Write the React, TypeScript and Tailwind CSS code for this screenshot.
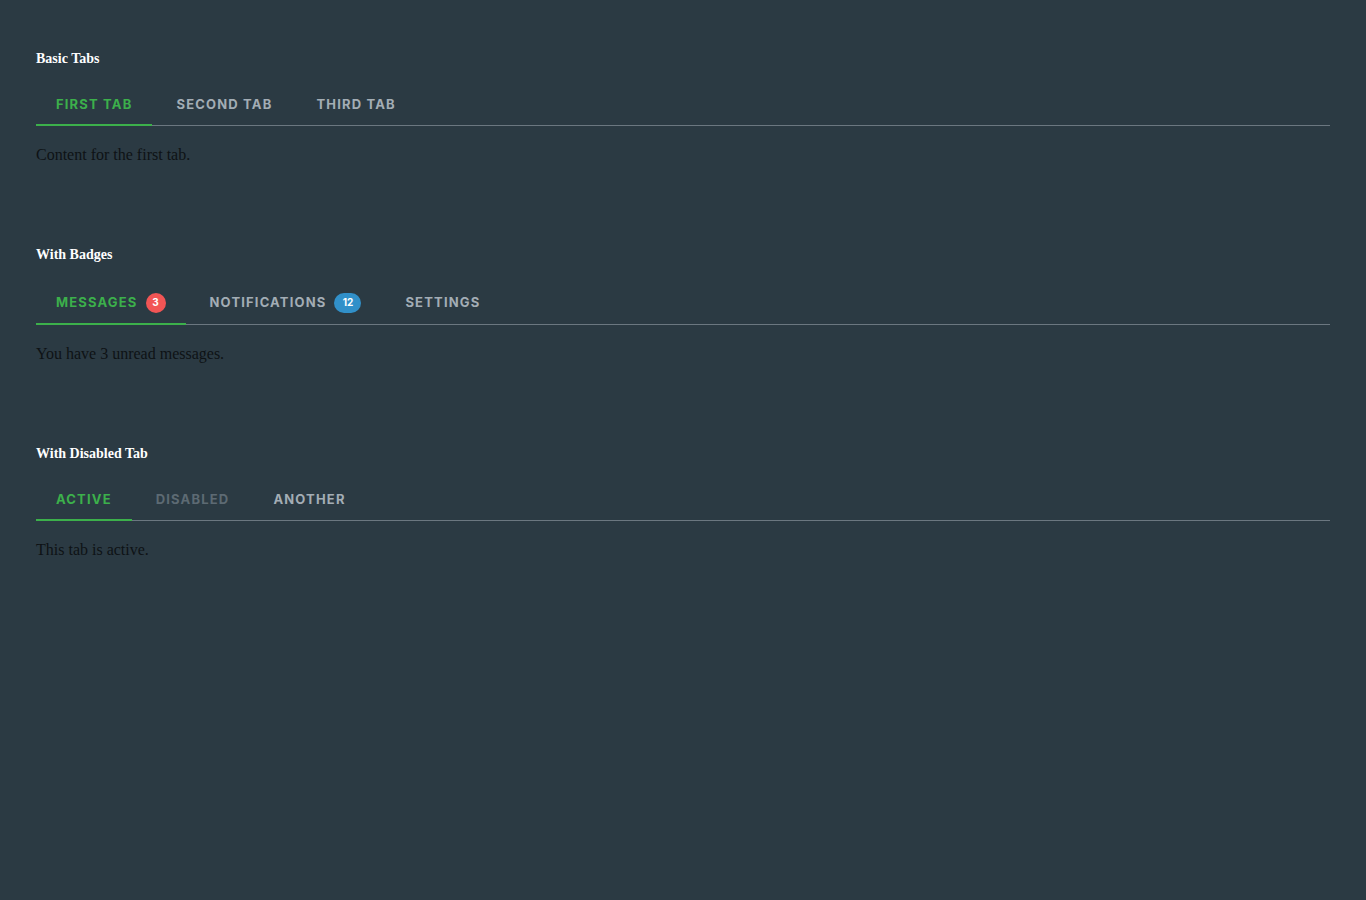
import { FC, useState } from "react";

interface TabItem {
  label: string
  badge?: string
  badgeClass?: string
  disabled?: boolean
  content: string
}

interface TabsProps {
  title: string
  tabs: TabItem[]
}

const Tabs: FC<TabsProps> = ({ title, tabs }) => {
  const [active, setActive] = useState<number>(0);
  const hasBadges = tabs.some((t) => t.badge);

  return (
    <section className="mb-[78px]">
      <h3 className="text-[14px] leading-5 font-bold text-white font-['Liberation_Serif',serif] mb-4">
        {title}
      </h3>
      <div className="flex gap-1 border-b border-[#6b7780]">
        {tabs.map((tab, i) => (
          <button
            key={tab.label}
            disabled={tab.disabled}
            onClick={() => setActive(i)}
            className={
              "flex items-center px-5 pt-px -mb-px border-b-2 font-['Inter',sans-serif] text-[13px] font-bold uppercase tracking-[0.09em] " +
              (hasBadges ? "h-[44px] " : "h-[41px] ") +
              (active === i
                ? "border-[#3cb04b] text-[#3cb04b]"
                : tab.disabled
                ? "border-transparent text-[#5d6a73] cursor-not-allowed"
                : "border-transparent text-[#a3adb5]")
            }
          >
            {tab.label}
            {tab.badge && (
              <span
                className={
                  "ml-2 h-5 rounded-full flex items-center justify-center text-[10px] font-bold text-white tracking-normal " +
                  tab.badgeClass
                }
              >
                {tab.badge}
              </span>
            )}
          </button>
        ))}
      </div>
      <p className="mt-[17px] text-base leading-6 text-[#0e1215] font-['Liberation_Serif',serif]">
        {tabs[active].content}
      </p>
    </section>
  );
};

const App: FC = () => {
  return (
    <div className="min-h-[900px] bg-[#2b3a43] px-9 pt-[49px]">
      <Tabs
        title="Basic Tabs"
        tabs={[
          { label: "First Tab", content: "Content for the first tab." },
          { label: "Second Tab", content: "Content for the second tab." },
          { label: "Third Tab", content: "Content for the third tab." },
        ]}
      />
      <Tabs
        title="With Badges"
        tabs={[
          { label: "Messages", badge: "3", badgeClass: "w-5 bg-[#f25555]", content: "You have 3 unread messages." },
          { label: "Notifications", badge: "12", badgeClass: "w-[27px] bg-[#3190c9]", content: "You have 12 notifications." },
          { label: "Settings", content: "Settings content." },
        ]}
      />
      <Tabs
        title="With Disabled Tab"
        tabs={[
          { label: "Active", content: "This tab is active." },
          { label: "Disabled", disabled: true, content: "Disabled." },
          { label: "Another", content: "Another tab." },
        ]}
      />
    </div>
  );
};

export default App;
